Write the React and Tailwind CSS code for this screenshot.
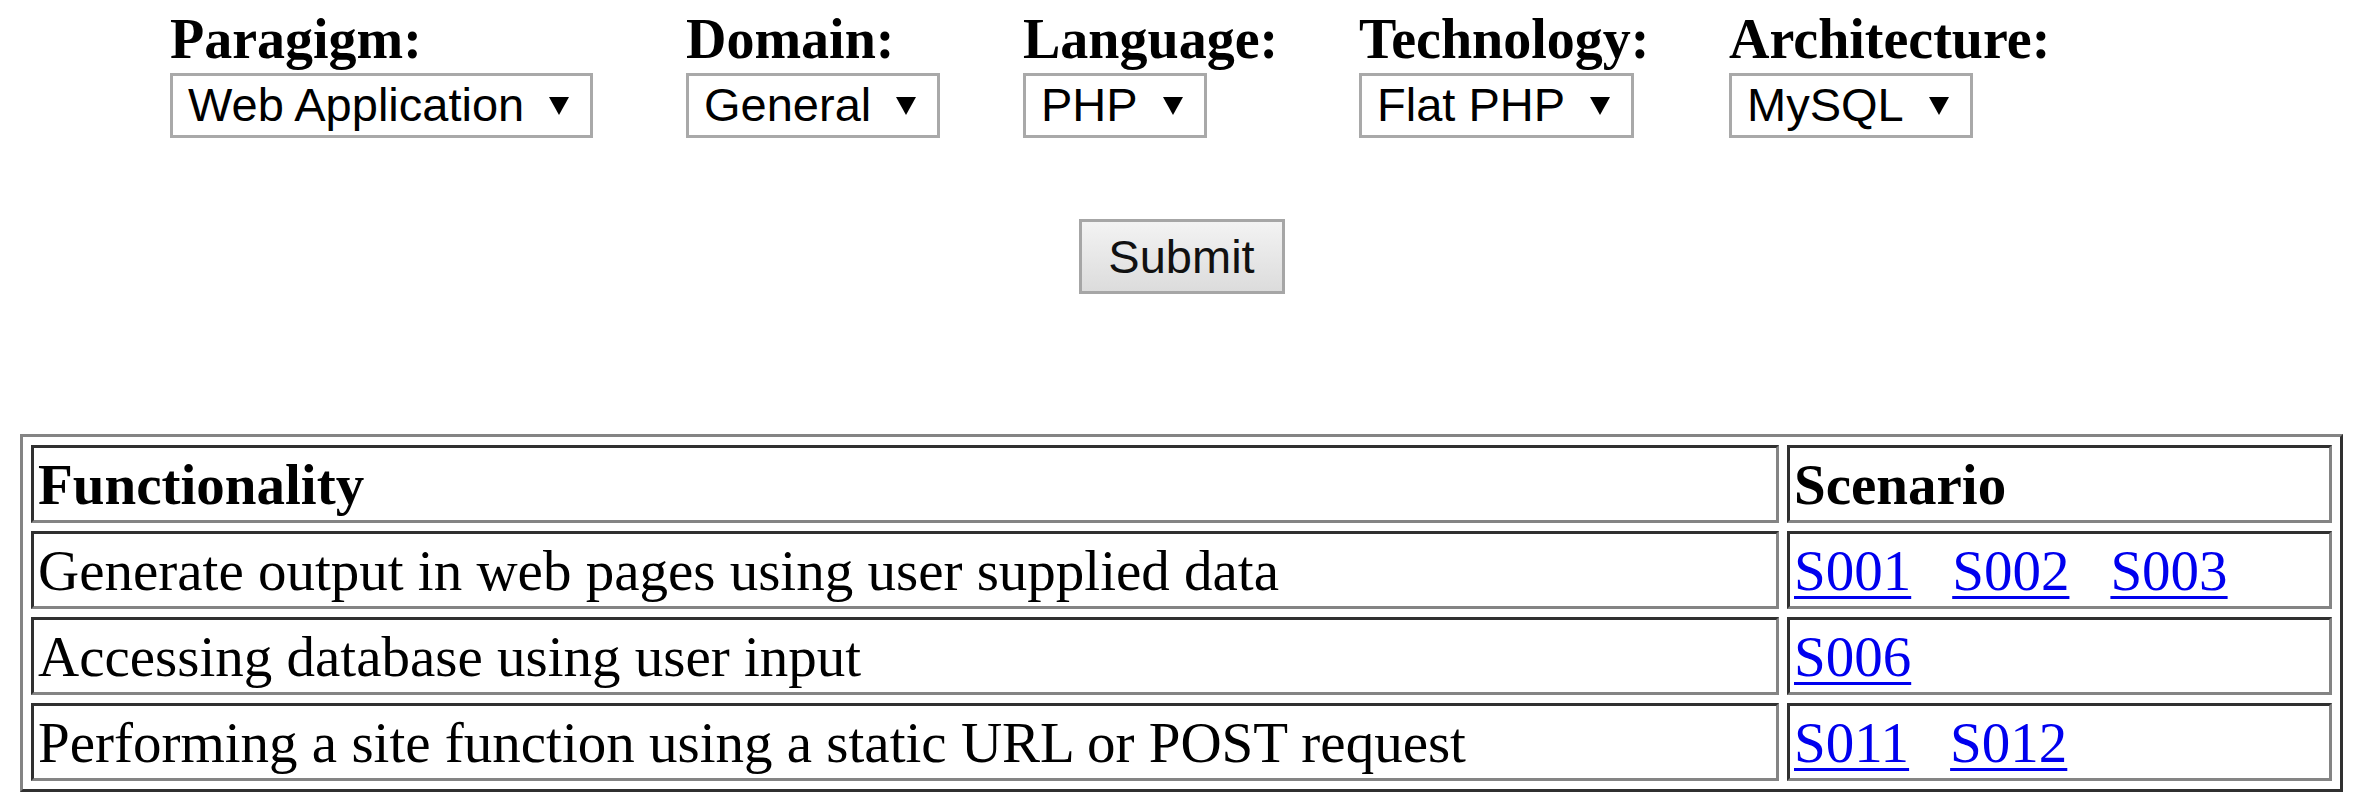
const serif = "font-['Liberation_Serif','Times_New_Roman',serif]"
const sans = "font-['Liberation_Sans',Arial,sans-serif]"

const fields = [
  { label: 'Paragigm:', value: 'Web Application', w: 'w-[516px]' },
  { label: 'Domain:', value: 'General', w: 'w-[337px]' },
  { label: 'Language:', value: 'PHP', w: 'w-[336px]' },
  { label: 'Technology:', value: 'Flat PHP', w: 'w-[370px]' },
  { label: 'Architecture:', value: 'MySQL', w: 'w-[400px]' },
]

const rows = [
  { text: 'Generate output in web pages using user supplied data', links: ['S001', 'S002', 'S003'] },
  { text: 'Accessing database using user input', links: ['S006'] },
  { text: 'Performing a site function using a static URL or POST request', links: ['S011', 'S012'] },
]

function Arrow() {
  return (
    <svg width="22" height="20" viewBox="0 0 22 20" className="shrink-0">
      <polygon points="1,1 21,1 11,19" fill="#000" />
    </svg>
  )
}

function FakeSelect({ value }) {
  return (
    <div className={`inline-flex items-center gap-[24px] h-[65px] border-[3px] border-[#a9a9a9] bg-white pl-[15px] pr-[20px] text-[47px] text-black ${sans}`}>
      <span className="whitespace-nowrap">{value}</span>
      <Arrow />
    </div>
  )
}

const cellBorder = 'border-[3px] border-t-[#303030] border-l-[#303030] border-b-[#848484] border-r-[#848484]'

export default function App() {
  return (
    <div className="min-h-[810px] bg-white text-black">
      {/* Filter form */}
      <div className="flex pt-[8px] pl-[170px]">
        {fields.map(f => (
          <div key={f.label} className={`${f.w} shrink-0 flex flex-col items-start`}>
            <div className={`text-[56px] font-bold leading-[62px] mb-[3px] whitespace-nowrap ${serif}`}>{f.label}</div>
            <FakeSelect value={f.value} />
          </div>
        ))}
      </div>

      <div className="flex justify-center mt-[81px]">
        <button className={`w-[206px] h-[75px] border-[3px] border-[#a6a6a6] bg-gradient-to-b from-[#f3f3f3] to-[#dcdcdc] text-[47px] text-[#111] ${sans}`}>
          Submit
        </button>
      </div>

      {/* Results table */}
      <div className="px-[20px] mt-[140px]">
        <table className={`w-full border-separate border-spacing-[8px] border-[3px] border-t-[#848484] border-l-[#848484] border-b-[#303030] border-r-[#303030] text-[57px] ${serif}`}>
          <thead>
            <tr>
              <th className={`w-[1748px] h-[78px] px-[4px] py-0 text-left font-bold leading-[63px] ${cellBorder}`}>Functionality</th>
              <th className={`h-[78px] px-[4px] py-0 text-left font-bold leading-[63px] ${cellBorder}`}>Scenario</th>
            </tr>
          </thead>
          <tbody>
            {rows.map(r => (
              <tr key={r.text}>
                <td className={`h-[78px] px-[4px] py-0 leading-[63px] whitespace-nowrap ${cellBorder}`}>{r.text}</td>
                <td className={`h-[78px] px-[4px] py-0 leading-[63px] ${cellBorder}`}>
                  <div className="flex gap-[41px]">
                    {r.links.map(l => (
                      <a key={l} href="#" className="text-[#0000ee] underline decoration-[3px] underline-offset-[6px]">{l}</a>
                    ))}
                  </div>
                </td>
              </tr>
            ))}
          </tbody>
        </table>
      </div>
    </div>
  )
}
